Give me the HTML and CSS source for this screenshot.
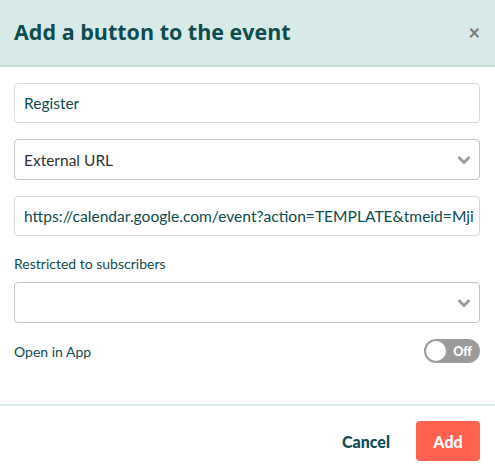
FILE: index.html
```html
<!DOCTYPE html>
<html>
<head>
    <title>Add a button</title>
    <link rel="stylesheet" href="styles.css">
</head>
<body>
    <div class="modal">
        <div class="modal-header">
            <h1>Add a button to the event</h1>
            <span class="close">&times;</span>
        </div>
        <div class="modal-body">
            <div class="field">
                <div class="input">Register</div>
            </div>
            <div class="field">
                <div class="input select">External URL
                    <svg class="chevron" width="14" height="10" viewBox="0 0 14 10"><path d="M1.5 2 L7 7.5 L12.5 2" fill="none" stroke="#9b9b9b" stroke-width="3"/></svg>
                </div>
            </div>
            <div class="field">
                <div class="input url">https://calendar.google.com/event?action=TEMPLATE&amp;tmeid=Mji</div>
            </div>
            <div class="field">
                <label>Restricted to subscribers</label>
                <div class="input select">
                    <svg class="chevron" width="14" height="10" viewBox="0 0 14 10"><path d="M1.5 2 L7 7.5 L12.5 2" fill="none" stroke="#9b9b9b" stroke-width="3"/></svg>
                </div>
            </div>
            <div class="toggle-row">
                <span>Open in App</span>
                <div class="toggle"><span class="knob"></span><span class="toggle-text">Off</span></div>
            </div>
        </div>
        <div class="modal-footer">
            <button type="button" class="cancel">Cancel</button>
            <button type="button" class="add">Add</button>
        </div>
    </div>
</body>
</html>
```

FILE: styles.css
```css
body {
    margin: 0;
    font-family: Lato, "Open Sans", sans-serif;
    color: #0d4c50;
    background-color: #fff;
}
.modal {
    width: 495px;
}
.modal-header {
    height: 67px;
    background-color: #d8eae8;
    border-bottom: 2px solid #c8dcda;
    display: flex;
    align-items: center;
    justify-content: space-between;
    padding: 0 15px 2px 14px;
    box-sizing: border-box;
}
.modal-header h1 {
    margin: 0;
    font-family: "Open Sans", Lato, sans-serif;
    font-size: 21.5px;
    font-weight: 700;
    color: #0d4c50;
}
.close {
    color: #777;
    font-size: 20px;
    font-weight: bold;
    line-height: 1;
}
.modal-body {
    padding: 16px 15px 41px 14px;
}
.field {
    margin-bottom: 16px;
}
label {
    display: block;
    font-size: 14px;
    margin-bottom: 10px;
    margin-top: 19px;
}
.input {
    height: 40px;
    border: 1px solid #d9d9d9;
    border-radius: 4px;
    box-sizing: border-box;
    padding: 0 9px;
    display: flex;
    align-items: center;
    font-size: 15.5px;
    white-space: nowrap;
    overflow: hidden;
}
.url {
    font-size: 15.6px;
    padding-right: 2px;
}
.select {
    height: 41px;
    border-color: #c4c4c4;
    color: #333;
    padding-right: 8px;
}
.chevron {
    margin-left: auto;
}
.toggle-row {
    display: flex;
    align-items: center;
    justify-content: space-between;
    font-size: 14px;
    margin-top: 16px;
}
.toggle {
    width: 56px;
    height: 24px;
    background-color: #9b9b9b;
    border-radius: 12px;
    display: flex;
    align-items: center;
    justify-content: space-between;
    padding: 0 8px 0 2px;
    box-sizing: border-box;
}
.knob {
    width: 20px;
    height: 20px;
    border-radius: 50%;
    background-color: #fff;
}
.toggle-text {
    color: #fff;
    font-size: 12.5px;
    font-weight: 900;
}
.modal-footer {
    border-top: 2px solid #d8eae8;
    display: flex;
    justify-content: flex-end;
    align-items: center;
    gap: 26px;
    padding: 15px 15px 0 0;
}
button {
    font-family: Lato, "Open Sans", sans-serif;
    font-size: 16px;
    font-weight: 900;
    border: none;
    cursor: pointer;
}
.cancel {
    background: none;
    color: #0d4c50;
    padding: 0;
}
.add {
    background-color: #ff604f;
    color: #fff;
    width: 64px;
    height: 40px;
    border-radius: 4px;
}
```
